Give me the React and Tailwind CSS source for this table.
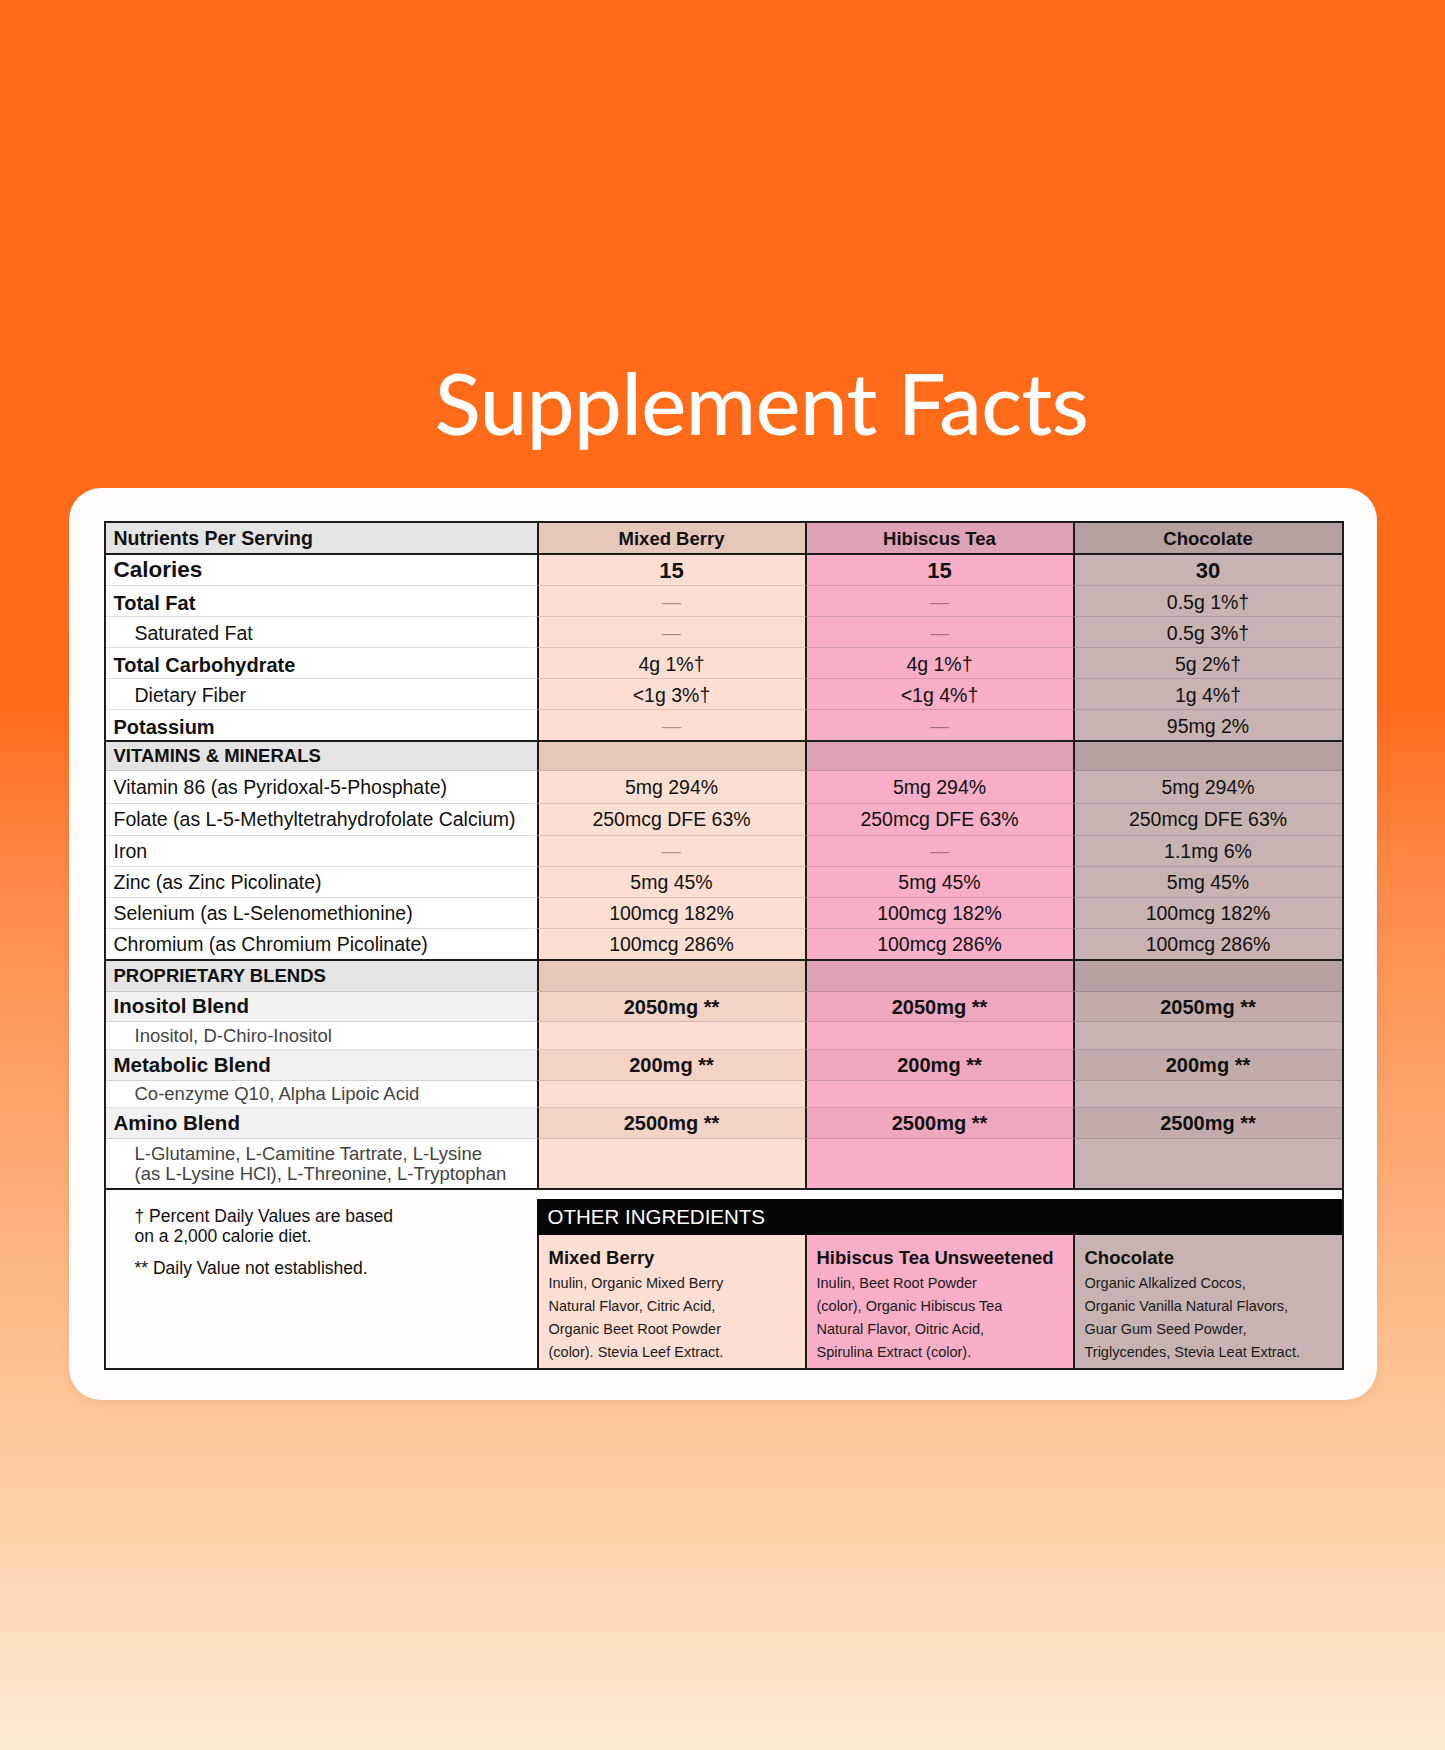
const COLS = "grid grid-cols-[431px_268px_268px_269px]";

const BODY = ["bg-white", "bg-[#FCDFD2]", "bg-[#F8AEC6]", "bg-[#C9B2B2]"];
const HEAD = ["bg-[#E4E4E4]", "bg-[#E5C8BA]", "bg-[#DFA1B5]", "bg-[#B7A0A0]"];
const BLEND = ["bg-[#F1F1F1]", "bg-[#F2D4C7]", "bg-[#EEA7BD]", "bg-[#C3ABAB]"];

const LABEL = {
  cal: "text-[22.5px] font-bold pl-[8px]",
  main: "text-[20px] font-bold pl-[8px] pt-[3px]",
  sub: "text-[19.5px] pl-[29px] pt-[3px]",
  section: "text-[18.5px] font-bold pl-[8px]",
  vit: "text-[19.5px] pl-[8px] pt-[1px]",
  blend: "text-[20.5px] font-bold pl-[8px]",
  blendsub: "text-[18.5px] text-[#444] pl-[29px] leading-[20px]",
};

const VALUE = {
  cal: "text-[22px] font-bold",
  main: "text-[19.5px] pt-[3px]",
  sub: "text-[19.5px] pt-[3px]",
  vit: "text-[19.5px] pt-[1px]",
  blend: "text-[20px] font-bold",
};

const rows = [
  { type: "cal", h: "h-[31px]", label: "Calories", v: ["15", "15", "30"] },
  { type: "main", h: "h-[31px]", label: "Total Fat", v: [null, null, "0.5g 1%†"] },
  { type: "sub", h: "h-[31px]", label: "Saturated Fat", v: [null, null, "0.5g 3%†"] },
  { type: "main", h: "h-[31px]", label: "Total Carbohydrate", v: ["4g 1%†", "4g 1%†", "5g 2%†"] },
  { type: "sub", h: "h-[31px]", label: "Dietary Fiber", v: ["<1g 3%†", "<1g 4%†", "1g 4%†"] },
  { type: "main", h: "h-[32px]", label: "Potassium", v: [null, null, "95mg 2%"], thick: true },
  { type: "section", h: "h-[29px]", label: "VITAMINS & MINERALS", v: ["", "", ""] },
  { type: "vit", h: "h-[33px]", label: "Vitamin 86 (as Pyridoxal-5-Phosphate)", v: ["5mg 294%", "5mg 294%", "5mg 294%"] },
  { type: "vit", h: "h-[32px]", label: "Folate (as L-5-Methyltetrahydrofolate Calcium)", v: ["250mcg DFE 63%", "250mcg DFE 63%", "250mcg DFE 63%"] },
  { type: "vit", h: "h-[31px]", label: "Iron", v: [null, null, "1.1mg 6%"] },
  { type: "vit", h: "h-[31px]", label: "Zinc (as Zinc Picolinate)", v: ["5mg 45%", "5mg 45%", "5mg 45%"] },
  { type: "vit", h: "h-[31px]", label: "Selenium (as L-Selenomethionine)", v: ["100mcg 182%", "100mcg 182%", "100mcg 182%"] },
  { type: "vit", h: "h-[32px]", label: "Chromium (as Chromium Picolinate)", v: ["100mcg 286%", "100mcg 286%", "100mcg 286%"], thick: true },
  { type: "section", h: "h-[31px]", label: "PROPRIETARY BLENDS", v: ["", "", ""] },
  { type: "blend", h: "h-[30px]", label: "Inositol Blend", v: ["2050mg **", "2050mg **", "2050mg **"] },
  { type: "blendsub", h: "h-[28px]", label: "Inositol, D-Chiro-Inositol", v: ["", "", ""] },
  { type: "blend", h: "h-[31px]", label: "Metabolic Blend", v: ["200mg **", "200mg **", "200mg **"] },
  { type: "blendsub", h: "h-[27px]", label: "Co-enzyme Q10, Alpha Lipoic Acid", v: ["", "", ""] },
  { type: "blend", h: "h-[31px]", label: "Amino Blend", v: ["2500mg **", "2500mg **", "2500mg **"] },
  {
    type: "blendsub",
    h: "h-[51px]",
    label: ["L-Glutamine, L-Camitine Tartrate, L-Lysine", "(as L-Lysine HCl), L-Threonine, L-Tryptophan"],
    v: ["", "", ""],
    thick: true,
  },
];

const ingredients = [
  {
    name: "Mixed Berry",
    bg: "bg-[#FCDFD2]",
    lines: ["Inulin, Organic Mixed Berry", "Natural Flavor, Citric Acid,", "Organic Beet Root Powder", "(color). Stevia Leef Extract."],
  },
  {
    name: "Hibiscus Tea Unsweetened",
    bg: "bg-[#F8AEC6]",
    lines: ["Inulin, Beet Root Powder", "(color), Organic Hibiscus Tea", "Natural Flavor, Oitric Acid,", "Spirulina Extract (color)."],
  },
  {
    name: "Chocolate",
    bg: "bg-[#C9B2B2]",
    lines: ["Organic Alkalized Cocos,", "Organic Vanilla Natural Flavors,", "Guar Gum Seed Powder,", "Triglycendes, Stevia Leat Extract."],
  },
];

function Row({ row }) {
  const bg = row.type === "section" ? HEAD : row.type === "blend" ? BLEND : BODY;
  const bottom = row.thick ? "border-b-2 border-b-[#1c1c1c]" : "border-b border-b-black/[0.12]";

  return (
    <div className={COLS}>
      <div className={`${row.h} ${bg[0]} ${bottom} flex flex-col justify-center text-[#111] ${LABEL[row.type]}`}>
        {Array.isArray(row.label) ? row.label.map((l) => <span key={l}>{l}</span>) : row.label}
      </div>
      {row.v.map((val, i) => (
        <div
          key={i}
          className={`${row.h} ${bg[i + 1]} ${bottom} border-l-2 border-l-[#1c1c1c] flex items-center justify-center text-[#111] ${VALUE[row.type] || "text-[19.5px]"}`}
        >
          {val === null ? <span className="text-black/35 text-[19px]">—</span> : val}
        </div>
      ))}
    </div>
  );
}

export default function App() {
  return (
    <div className="w-full h-[1750px] overflow-hidden bg-[linear-gradient(180deg,#FF6A18_0%,#FF6B1A_40%,#FE8B4A_51%,#FDA56D_64%,#FCBE8C_76%,#FCD4AE_89%,#FDEBD3_100%)]">

      {/* TITLE */}
      <h1 className="pt-[360px] pl-[78px] text-center text-white text-[85px] leading-none font-medium tracking-[-0.5px] font-['Lato','Open_Sans',sans-serif]">
        Supplement Facts
      </h1>

      {/* CARD */}
      <div className="mx-auto mt-[43px] w-[1308px] rounded-[32px] bg-[#FFFDFC] pt-[33px] pl-[35px] pr-[33px] pb-[30px] shadow-[0_2px_10px_rgba(0,0,0,0.06)]">

        <div className="w-[1240px] border-2 border-[#1c1c1c] font-['Liberation_Sans',Arial,sans-serif]">

          {/* HEADER */}
          <div className={COLS}>
            <div className={`h-[32px] ${HEAD[0]} border-b-2 border-b-[#1c1c1c] flex items-center pl-[8px] pt-[1px] text-[19.5px] font-bold text-[#111]`}>
              Nutrients Per Serving
            </div>
            {["Mixed Berry", "Hibiscus Tea", "Chocolate"].map((name, i) => (
              <div
                key={name}
                className={`h-[32px] ${HEAD[i + 1]} border-b-2 border-b-[#1c1c1c] border-l-2 border-l-[#1c1c1c] flex items-center justify-center pt-[1px] text-[18.5px] font-bold text-[#111]`}
              >
                {name}
              </div>
            ))}
          </div>

          {rows.map((row, i) => (
            <Row key={i} row={row} />
          ))}

          {/* FOOTER */}
          <div className={`${COLS} h-[178px]`}>
            <div className="pl-[29px] pt-[16px] text-[17.5px] leading-[20px] text-[#111]">
              <p>† Percent Daily Values are based</p>
              <p>on a 2,000 calorie diet.</p>
              <p className="mt-[12px]">** Daily Value not established.</p>
            </div>

            <div className="col-span-3 pt-[9px] flex flex-col">
              <div className="h-[36px] bg-[#050505] text-white text-[20.5px] pl-[11px] flex items-center">
                OTHER INGREDIENTS
              </div>
              <div className="grid grid-cols-[268px_268px_269px] flex-1">
                {ingredients.map((ing) => (
                  <div key={ing.name} className={`${ing.bg} border-l-2 border-l-[#1c1c1c] px-[10px] pt-[11px] text-[#1a1a1a]`}>
                    <p className="mb-[3px] text-[18.5px] leading-[23px] font-bold text-[#111]">{ing.name}</p>
                    {ing.lines.map((l) => (
                      <p key={l} className="text-[14.5px] leading-[23px]">
                        {l}
                      </p>
                    ))}
                  </div>
                ))}
              </div>
            </div>
          </div>

        </div>

      </div>

    </div>
  );
}
